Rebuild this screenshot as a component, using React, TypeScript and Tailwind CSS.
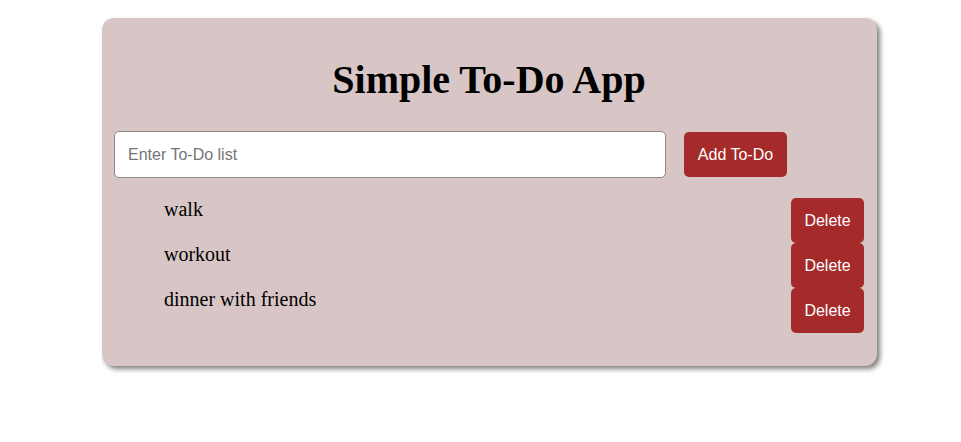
import { useState } from "react";

export default function App() {
  const [todos, setTodos] = useState<string[]>(["walk", "workout", "dinner with friends"]);
  const [text, setText] = useState("");

  const addTodo = () => {
    if (!text.trim()) return;
    setTodos((prev) => [...prev, text.trim()]);
    setText("");
  };

  return (
    <div className="min-h-[442px] bg-white pt-[18px] font-['Liberation_Serif',serif]">
      <div className="ml-[102px] w-[775px] rounded-[12px] bg-[#d8c6c6] p-[12px] pr-[13px] pb-[33px] shadow-[3px_3px_5px_rgba(0,0,0,0.5)]">
        <h1 className="mt-[27px] mb-[28px] text-center text-[40px] font-bold leading-[46px] text-black">
          Simple To-Do App
        </h1>

        {/* input row */}
        <div className="flex items-center gap-[18px]">
          <input
            type="text"
            value={text}
            onChange={(e) => setText(e.target.value)}
            placeholder="Enter To-Do list"
            className="h-[47px] w-[552px] rounded-[5px] border border-[#8a8a8a] bg-white px-[13px] font-['Liberation_Sans',Arial,sans-serif] text-[16px] text-black placeholder:text-[#757575] focus:outline-none"
          />
          <button
            onClick={addTodo}
            className="h-[45px] w-[103px] rounded-[5px] bg-[#a52a2a] font-['Liberation_Sans',Arial,sans-serif] text-[16px] text-white"
          >
            Add To-Do
          </button>
        </div>

        <ul className="mt-[20px] pl-[50px]">
          {todos.map((t, i) => (
            <li key={i} className="flex items-start justify-between">
              <span className="text-[20px] leading-[23px] text-black">{t}</span>
              <button
                onClick={() => setTodos((prev) => prev.filter((_, j) => j !== i))}
                className="h-[45px] w-[73px] rounded-[5px] bg-[#a52a2a] font-['Liberation_Sans',Arial,sans-serif] text-[16px] text-white"
              >
                Delete
              </button>
            </li>
          ))}
        </ul>
      </div>
    </div>
  );
}
